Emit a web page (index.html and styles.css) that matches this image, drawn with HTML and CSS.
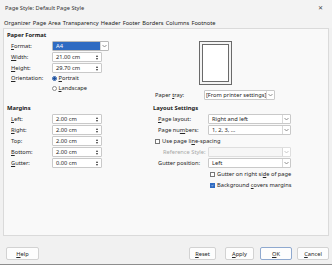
FILE: index.html
```html
<!DOCTYPE html>
<html>
<head>
<meta charset="utf-8">
<link rel="stylesheet" href="styles.css">
</head>
<body>
<div class="win">
  <div class="titlebar">
    <span class="title">Page Style: Default Page Style</span>
    <span class="close">✕</span>
  </div>
  <div class="tabs">
    <span>Organizer</span><span class="active">Page</span><span>Area</span><span>Transparency</span><span>Header</span><span>Footer</span><span>Borders</span><span>Columns</span><span>Footnote</span>
  </div>
  <div class="panel">
    <div class="col left">
      <div class="heading h1">Paper Format</div>
      <div class="row first">
        <span class="lbl"><u>F</u>ormat:</span>
        <span class="combo sel"><span class="val">A4</span><span class="arrow"><svg width="5" height="4" viewBox="0 0 5 4"><path d="M0.5 1 L2.5 3 L4.5 1" fill="none" stroke="#777" stroke-width="0.8"/></svg></span></span>
      </div>
      <div class="row">
        <span class="lbl"><u>W</u>idth:</span>
        <span class="spin"><span class="val">21.00 cm</span><span class="btns"><i class="up"></i><i class="dn"></i></span></span>
      </div>
      <div class="row">
        <span class="lbl"><u>H</u>eight:</span>
        <span class="spin"><span class="val">29.70 cm</span><span class="btns"><i class="up"></i><i class="dn"></i></span></span>
      </div>
      <div class="row tight">
        <span class="lbl"><u>O</u>rientation:</span>
        <span class="radio"><i class="dot on"></i><span><u>P</u>ortrait</span></span>
      </div>
      <div class="row tight">
        <span class="lbl"></span>
        <span class="radio"><i class="dot"></i><span><u>L</u>andscape</span></span>
      </div>
      <div class="heading h2">Margins</div>
      <div class="row first">
        <span class="lbl"><u>L</u>eft:</span>
        <span class="spin"><span class="val">2.00 cm</span><span class="btns"><i class="up"></i><i class="dn"></i></span></span>
      </div>
      <div class="row">
        <span class="lbl"><u>R</u>ight:</span>
        <span class="spin"><span class="val">2.00 cm</span><span class="btns"><i class="up"></i><i class="dn"></i></span></span>
      </div>
      <div class="row">
        <span class="lbl">Top:</span>
        <span class="spin"><span class="val">2.00 cm</span><span class="btns"><i class="up"></i><i class="dn"></i></span></span>
      </div>
      <div class="row">
        <span class="lbl"><u>B</u>ottom:</span>
        <span class="spin"><span class="val">2.00 cm</span><span class="btns"><i class="up"></i><i class="dn"></i></span></span>
      </div>
      <div class="row">
        <span class="lbl"><u>G</u>utter:</span>
        <span class="spin"><span class="val">0.00 cm</span><span class="btns"><i class="up"></i><i class="dn"></i></span></span>
      </div>
    </div>
    <div class="col right">
      <div class="preview"><div class="page"></div></div>
      <div class="row tray">
        <span class="lbl">Paper <u>t</u>ray:</span>
        <span class="combo trayc"><span class="val">[From printer settings]</span><span class="arrow"><svg width="5" height="4" viewBox="0 0 5 4"><path d="M0.5 1 L2.5 3 L4.5 1" fill="none" stroke="#777" stroke-width="0.8"/></svg></span></span>
      </div>
      <div class="heading h3">Layout Settings</div>
      <div class="row first r">
        <span class="lbl"><u>P</u>age layout:</span>
        <span class="combo wide"><span class="val">Right and left</span><span class="arrow"><svg width="5" height="4" viewBox="0 0 5 4"><path d="M0.5 1 L2.5 3 L4.5 1" fill="none" stroke="#777" stroke-width="0.8"/></svg></span></span>
      </div>
      <div class="row r">
        <span class="lbl">Page nu<u>m</u>bers:</span>
        <span class="combo wide"><span class="val">1, 2, 3, ...</span><span class="arrow"><svg width="5" height="4" viewBox="0 0 5 4"><path d="M0.5 1 L2.5 3 L4.5 1" fill="none" stroke="#777" stroke-width="0.8"/></svg></span></span>
      </div>
      <div class="row r chk1">
        <span class="check"><i class="box"></i><span>Use page li<u>n</u>e-spacing</span></span>
      </div>
      <div class="row r">
        <span class="lbl dis ind">Reference Style:</span>
        <span class="combo wide disabled"><span class="val"></span><span class="arrow"><svg width="5" height="4" viewBox="0 0 5 4"><path d="M0.5 1 L2.5 3 L4.5 1" fill="none" stroke="#bbb" stroke-width="0.8"/></svg></span></span>
      </div>
      <div class="row r">
        <span class="lbl">Gutter position:</span>
        <span class="combo wide"><span class="val">Left</span><span class="arrow"><svg width="5" height="4" viewBox="0 0 5 4"><path d="M0.5 1 L2.5 3 L4.5 1" fill="none" stroke="#777" stroke-width="0.8"/></svg></span></span>
      </div>
      <div class="row r chk2">
        <span class="check"><i class="box"></i><span>Gutter on right si<u>d</u>e of page</span></span>
      </div>
      <div class="row r chk2">
        <span class="check"><i class="box on"><svg width="5" height="5" viewBox="0 0 5 5"><path d="M1 2.6 L2.1 3.7 L4 1.3" fill="none" stroke="#fff" stroke-width="0.8"/></svg></i><span>Background <u>c</u>overs margins</span></span>
      </div>
    </div>
  </div>
  <div class="footer">
    <button class="btn help"><u>H</u>elp</button>
    <div class="spacer"></div>
    <button class="btn reset"><u>R</u>eset</button>
    <button class="btn apply"><u>A</u>pply</button>
    <button class="btn ok"><u>O</u>K</button>
    <button class="btn cancel"><u>C</u>ancel</button>
  </div>
</div>
</body>
</html>
```
FILE: styles.css
```css
* { box-sizing: border-box; }
html, body { margin: 0; padding: 0; }
body {
  width: 332px;
  height: 265px;
  overflow: hidden;
  background: #f1f1f1;
  font-family: "Noto Sans", "Open Sans", sans-serif;
  font-size: 5.7px;
  color: #262626;
}
u { text-decoration: underline; text-underline-offset: 1px; text-decoration-thickness: 0.5px; }
.win {
  width: 332px;
  height: 265px;
  display: flex;
  flex-direction: column;
  border-bottom: 1px solid #8d8d8d;
}
.titlebar {
  height: 17px;
  display: flex;
  align-items: center;
  justify-content: space-between;
  padding: 0 9px 2px 5px;
  background: #f3f3f3;
}
.title { color: #333; }
.close { font-size: 6px; color: #444; }
.tabs {
  height: 11px;
  display: flex;
  align-items: center;
  gap: 2.2px;
  padding-left: 4px;
  background: #f3f3f3;
}
.tabs span { color: #222; }
.panel {
  margin: 0 3px;
  height: 208px;
  border: 1px solid #dadada;
  background: #f9f9f9;
  display: grid;
  grid-template-columns: 147px 1fr;
}
.col { display: flex; flex-direction: column; }
.heading { font-weight: bold; height: 8px; line-height: 8px; color: #1a1a1a; font-size: 5.8px; }
.h1 { margin-top: 2px; padding-left: 3px; }
.h2 { margin-top: 11px; padding-left: 3px; }
.h3 { margin-top: 4px; padding-left: 2px; }
.row {
  height: 10px;
  margin-top: 1px;
  display: flex;
  align-items: center;
  padding-left: 7px;
}
.row.first { margin-top: 2px; }
.row.tight { margin-top: 0; }
.lbl { width: 41px; flex: none; white-space: nowrap; }
.right .row { padding-left: 7px; }
.right .r .lbl { width: 50px; }
.lbl.dis { color: #a8a8a8; }
.lbl.ind { padding-left: 5px; }
.combo, .spin {
  height: 10px;
  display: flex;
  align-items: center;
  background: #fff;
  border: 1px solid #c9c9c9;
  border-radius: 1px;
}
.val { flex: 1; padding-left: 3px; white-space: nowrap; overflow: hidden; }
.arrow {
  width: 8px;
  height: 100%;
  flex: none;
  display: flex;
  align-items: center;
  justify-content: center;
  border-left: 1px solid #d8d8d8;
  background: #fff;
}
.combo.sel { width: 57px; border-color: #b9b9b9; }
.combo.sel .val { background: #2f6bc2; color: #fff; height: 100%; line-height: 8px; }
.spin { width: 50px; }
.btns {
  width: 6px;
  height: 8px;
  margin-right: 1px;
  display: flex;
  flex-direction: column;
  align-items: center;
  justify-content: center;
  gap: 1px;
}
.btns i { width: 0; height: 0; border-left: 1.5px solid transparent; border-right: 1.5px solid transparent; }
.btns .up { border-bottom: 2px solid #333; }
.btns .dn { border-top: 2px solid #333; }
.radio { display: flex; align-items: center; gap: 1.5px; }
.dot {
  width: 5px; height: 5px; border-radius: 50%;
  border: 1px solid #8a8a8a; background: #fff;
}
.dot.on { border: 1px solid #2f5fa8; background: radial-gradient(circle, #1b4f9e 0 1.3px, #fff 1.5px); }
.preview {
  margin: 12px 0 0 48px;
  width: 33px;
  height: 44px;
  border: 1px solid #6a6a6a;
  padding: 2px;
  background: #f4f4f4;
}
.page { width: 100%; height: 100%; border: 1px solid #6a6a6a; background: #fff; }
.row.tray { margin-top: 5px; padding-left: 4px; }
.row.tray .lbl { width: 49px; }
.combo.trayc { width: 71px; }
.combo.trayc .val { padding-left: 1px; overflow: visible; }
.combo.wide { width: 83px; }
.combo.disabled { background: #f6f6f6; border-color: #dedede; }
.check { display: flex; align-items: center; gap: 2px; white-space: nowrap; }
.box {
  width: 5px; height: 5px; border: 1px solid #777; background: #fff;
  display: flex; align-items: center; justify-content: center;
}
.box.on { background: #2f6bc2; border-color: #2f6bc2; }
.row.chk1 { padding-left: 4px; }
.row.chk2 { padding-left: 59px; }
.footer {
  flex: 1;
  display: flex;
  align-items: flex-start;
  padding: 11px 3px 0 6px;
}
.spacer { flex: 1; }
.btn {
  font-family: inherit;
  font-size: 5.7px;
  color: #262626;
  height: 13px;
  padding: 0;
  background: #fdfdfd;
  border: 1px solid #d2d2d2;
  border-radius: 2px;
}
.help { width: 33px; }
.reset { width: 27px; }
.apply { width: 29px; margin-left: 9px; }
.ok { width: 32px; margin-left: 6px; border-color: #8fa9cf; }
.cancel { width: 32px; margin-left: 5px; }
```
